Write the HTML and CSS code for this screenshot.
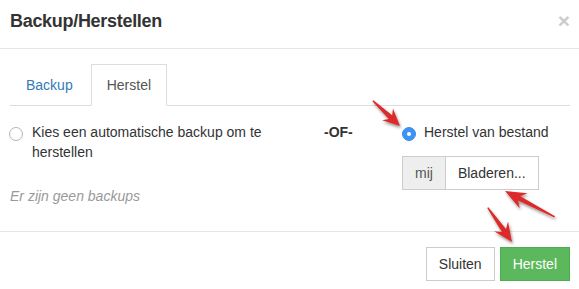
FILE: index.html
```html
<!DOCTYPE html>
<html lang="nl">
<head>
<meta charset="utf-8">
<title>Backup/Herstellen</title>
<link rel="stylesheet" href="styles.css">
</head>
<body>
<div class="modal">
  <div class="modal-header">
    <h4 class="modal-title">Backup/Herstellen</h4>
    <span class="close">&times;</span>
  </div>
  <div class="modal-body">
    <ul class="nav-tabs">
      <li class="tab"><a>Backup</a></li>
      <li class="tab active"><a>Herstel</a></li>
    </ul>
    <div class="tab-content">
      <div class="col-left">
        <label class="radio"><span class="radio-input"></span><span class="radio-text">Kies een automatische backup om te herstellen</span></label>
        <p class="empty">Er zijn geen backups</p>
      </div>
      <div class="col-or">-OF-</div>
      <div class="col-right">
        <label class="radio"><span class="radio-input checked"></span><span class="radio-text">Herstel van bestand</span></label>
        <div class="input-group">
          <span class="addon">mij</span>
          <span class="browse">Bladeren...</span>
        </div>
      </div>
    </div>
  </div>
  <div class="modal-footer">
    <button class="btn btn-default">Sluiten</button>
    <button class="btn btn-success">Herstel</button>
  </div>
</div>
<svg class="annotations" width="579" height="289" viewBox="0 0 579 289">
  <defs>
    <filter id="sh" x="-30%" y="-30%" width="160%" height="160%">
      <feDropShadow dx="1" dy="2" stdDeviation="1.5" flood-color="#000" flood-opacity="0.45"/>
    </filter>
  </defs>
  <g fill="#dc2c2c" filter="url(#sh)">
    <polygon transform="translate(400 126) rotate(42.8)" points="0,0 -17,-8 -13,-2.5 -37,-0.7 -37,0.7 -13,2.5 -17,8"/>
    <polygon transform="translate(505 191) rotate(207.5)" points="0,0 -21,-8.5 -16,-2.5 -56,-0.7 -56,0.7 -16,2.5 -21,8.5"/>
    <polygon transform="translate(512 242) rotate(54.8)" points="0,0 -19,-8.5 -14,-2.5 -42,-0.7 -42,0.7 -14,2.5 -19,8.5"/>
  </g>
</svg>
</body>
</html>
```
FILE: styles.css
```css
* { box-sizing: border-box; }
html, body { margin: 0; padding: 0; background: #fff; }
body {
  font-family: "Liberation Sans", Arial, sans-serif;
  font-size: 14px;
  line-height: 20px;
  color: #333;
  width: 579px;
  height: 289px;
  overflow: hidden;
  position: relative;
}
.modal { width: 579px; }
.modal-header {
  display: flex;
  justify-content: space-between;
  align-items: flex-start;
  padding: 8px 9px 14px 10px;
  border-bottom: 1px solid #e5e5e5;
}
.modal-title {
  margin: 0;
  font-size: 18px;
  line-height: 26px;
  font-weight: bold;
  letter-spacing: -0.3px;
  color: #333;
}
.close {
  font-size: 21px;
  font-weight: bold;
  line-height: 26px;
  color: #000;
  opacity: 0.2;
}
.modal-body { padding: 15px 9px 25px 10px; }
.nav-tabs {
  list-style: none;
  margin: 0;
  padding: 0;
  display: flex;
  border-bottom: 1px solid #ddd;
}
.tab { margin-bottom: -1px; margin-right: 2px; }
.tab a {
  display: block;
  padding: 10px 15px;
  line-height: 20px;
  border: 1px solid transparent;
  border-radius: 0;
  color: #337ab7;
}
.tab.active a {
  color: #555;
  background: #fff;
  border-color: #ddd #ddd transparent #ddd;
}
.tab-content {
  display: flex;
  align-items: flex-start;
  padding-top: 16px;
}
.col-left { width: 290px; }
.col-or {
  margin-left: 24px;
  width: 30px;
  margin-right: 47px;
  font-weight: bold;
  white-space: nowrap;
}
.col-right { flex: 1; }
.radio {
  display: flex;
  align-items: flex-start;
}
.radio-input {
  flex: none;
  width: 14px;
  height: 14px;
  border-radius: 50%;
  border: 1px solid #b5b5b5;
  background: #fff;
  margin-top: 5px;
  margin-left: -1px;
  margin-right: 8px;
}
.col-left .radio-input { margin-right: 9px; }
.radio-input.checked {
  background: #3d93f6;
  border-color: #3a8cec;
  position: relative;
  margin-left: 1px;
}
.radio-input.checked::after {
  content: "";
  position: absolute;
  width: 4px;
  height: 4px;
  left: 4px;
  top: 4px;
  border-radius: 50%;
  background: #fff;
}
.empty {
  margin: 24px 0 0;
  color: #999;
  font-style: italic;
}
.input-group {
  display: inline-flex;
  margin-top: 14px;
  margin-left: 1px;
}
.addon {
  padding: 6px 12px;
  background: #eee;
  border: 1px solid #ccc;
  color: #555;
}
.browse {
  padding: 6px 12px;
  background: #fff;
  border: 1px solid #ccc;
  border-left: 0;
  color: #333;
}
.modal-footer {
  display: flex;
  justify-content: flex-end;
  gap: 5px;
  padding: 15px 9px 15px 10px;
  border-top: 1px solid #e5e5e5;
}
.btn {
  font-family: inherit;
  font-size: 14px;
  line-height: 20px;
  padding: 6px 12px;
  border: 1px solid #ccc;
  border-radius: 0;
  background: #fff;
  color: #333;
  margin: 0;
}
.btn-success {
  background: #5cb85c;
  border-color: #4cae4c;
  color: #fff;
}
.annotations {
  position: absolute;
  left: 0;
  top: 0;
  pointer-events: none;
}
```
